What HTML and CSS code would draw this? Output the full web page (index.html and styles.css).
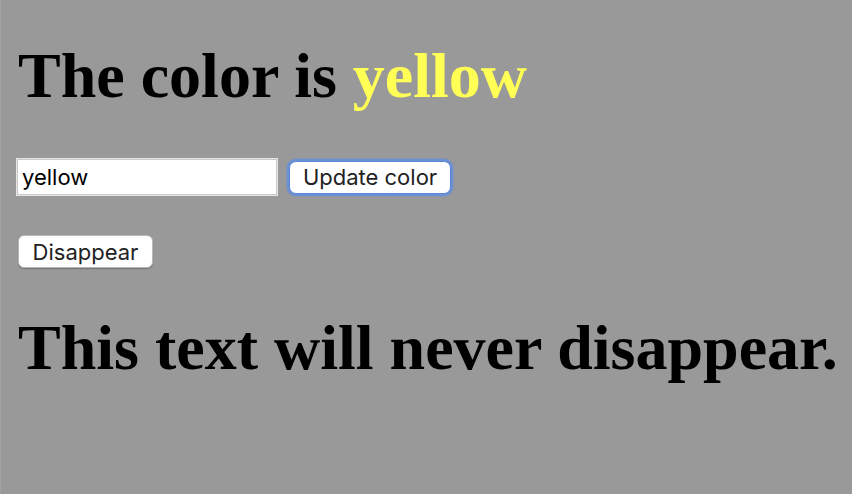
FILE: index.html
```html
<!DOCTYPE html>
<html>
<head>
<meta charset="utf-8">
<link rel="stylesheet" href="styles.css">
</head>
<body>
<div class="page">
  <h1 class="title">The color is <span class="yellow">yellow</span></h1>
  <div class="row">
    <input class="field" type="text" value="yellow">
    <button class="btn btn-focus">Update color</button>
  </div>
  <div class="row2">
    <button class="btn btn-small">Disappear</button>
  </div>
  <h1 class="title title2">This text will never disappear.</h1>
</div>
</body>
</html>
```
FILE: styles.css
```css
html, body {
  margin: 0;
  padding: 0;
  height: 100%;
  background: #999999;
}
body {
  border-left: 1px solid #a2a2a2;
  box-sizing: border-box;
}
.page {
  padding: 0 0 0 15px;
  display: flex;
  flex-direction: column;
  align-items: flex-start;
}
.title {
  font-family: "Liberation Serif", "Times New Roman", serif;
  font-weight: bold;
  font-size: 64px;
  line-height: 70px;
  margin: 41px 0 0 2px;
  color: #000;
  white-space: nowrap;
}
.yellow {
  color: #ffff55;
}
.row {
  display: flex;
  align-items: center;
  gap: 10px;
  margin-top: 47px;
}
.field {
  box-sizing: border-box;
  width: 262px;
  height: 38px;
  margin: 0;
  padding: 0 0 0 5px;
  border: 1px solid #e6e6e6;
  box-shadow: inset 0 0 0 1px #c9c9c9;
  background: #fff;
  font-family: Inter, "Liberation Sans", sans-serif;
  font-size: 22px;
  color: #000;
  outline: none;
}
.btn {
  box-sizing: border-box;
  background: #fff;
  border: 1px solid #b9b9b9;
  border-radius: 6px;
  font-family: Inter, "Liberation Sans", sans-serif;
  font-size: 22px;
  color: #222;
  margin: 0;
  padding: 0;
  box-shadow: 0 1px 1px rgba(0, 0, 0, 0.25);
}
.btn-focus {
  width: 162px;
  height: 33px;
  border: 1px solid #5a86d6;
  border-radius: 7px;
  box-shadow: 0 0 0 2px #6c90d2, 0 0 1px 3px rgba(108, 144, 210, 0.4);
  margin-left: 1px;
}
.row2 {
  margin-top: 39px;
  margin-left: 2px;
}
.btn-small {
  width: 135px;
  height: 33px;
}
.title2 {
  margin-top: 45px;
}
```
